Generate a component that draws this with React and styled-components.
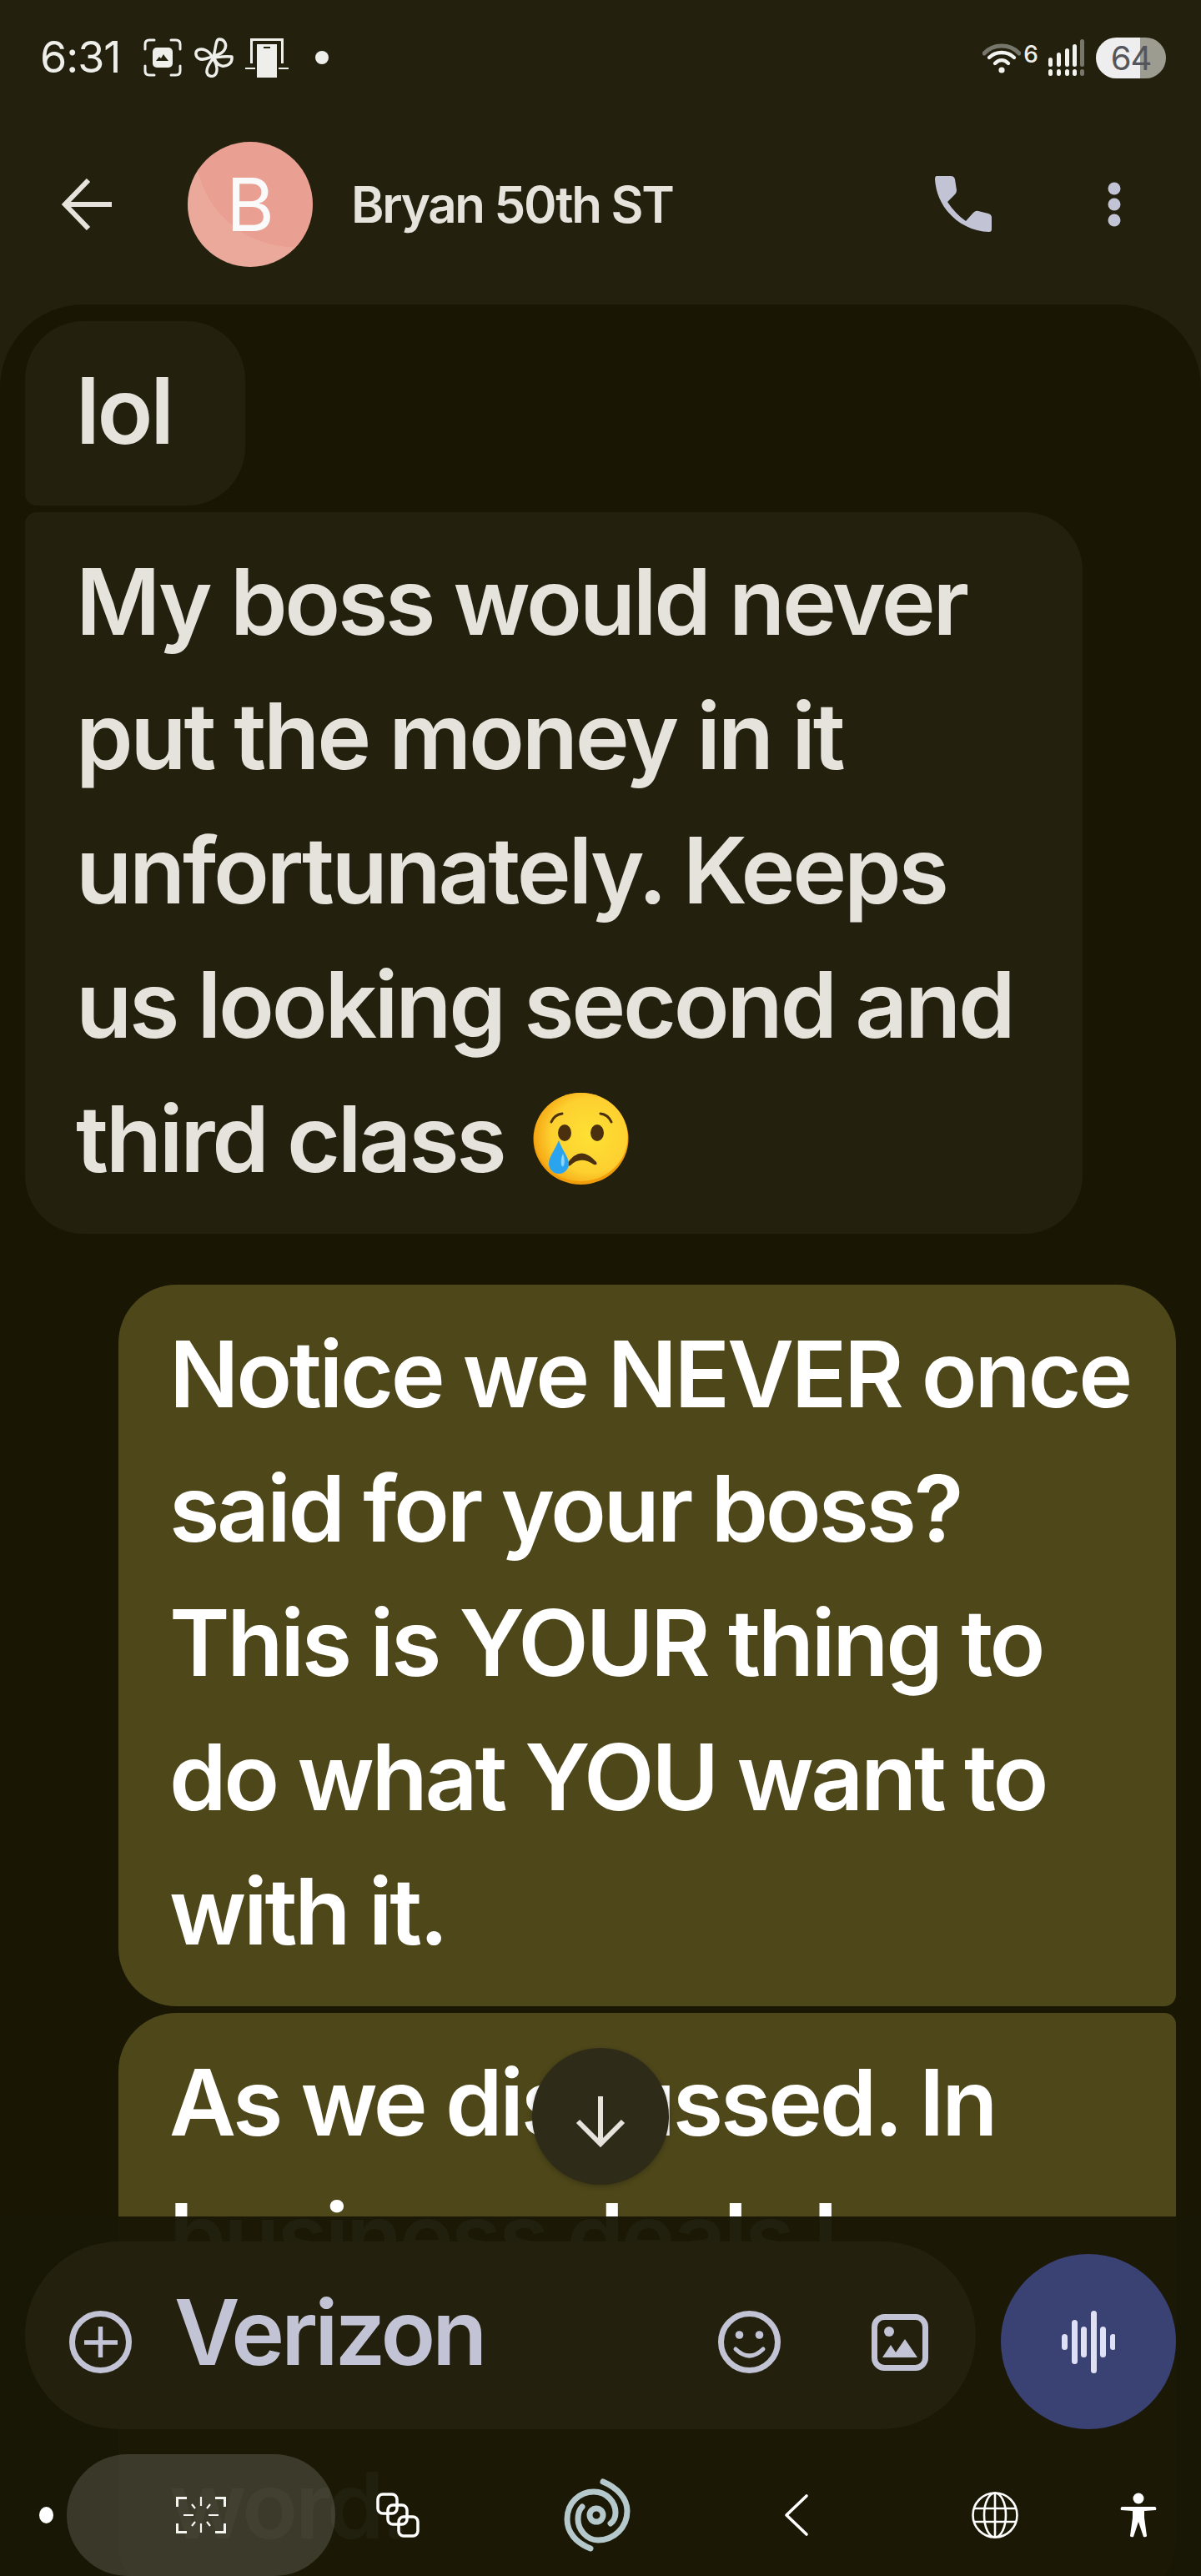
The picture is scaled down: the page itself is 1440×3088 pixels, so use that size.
import React from "react";
import styled, { createGlobalStyle } from "styled-components";

const FONT = `Inter, "Noto Sans", "Liberation Sans", sans-serif`;

const Global = createGlobalStyle`
  html, body { margin: 0; padding: 0; background: #191704; }
  * { box-sizing: border-box; }
  svg { flex-shrink: 0; }
`;

// [Icons]--------------------------------------------------------------------------------------------
const ScreenshotIcon = () => (
  <svg width="46" height="46" viewBox="0 0 46 46" fill="none" stroke="#eeeeea" strokeWidth="3" strokeLinecap="round">
    <path d="M2 13V7Q2 2 7 2h6M33 2h6q5 0 5 5v6M44 33v6q0 5-5 5h-6M13 44H7q-5 0-5-5v-6" />
    <rect x="11" y="11" width="24" height="24" rx="5" fill="#eeeeea" stroke="none" />
    <path d="M15 27l4-5 2 2 3-5 2 3 4 5z" fill="#23200e" stroke="none" />
  </svg>
);

const FanIcon = () => (
  <svg width="48" height="48" viewBox="0 0 48 48" fill="none" stroke="#eeeeea" strokeWidth="3.4" strokeLinejoin="round">
    <path d="M24 22C27 14 26 2 31 2c6 0 9 6 7 11-2 5-8 8-14 9z" />
    <path d="M25 24c8-1 13-2 21-1 1 8-6 12-12 11-5-1-8-6-9-10z" />
    <path d="M23 25c-3 6-8 10-7 17 1 4 5 5 8 4 6-3 5-14-1-21z" />
    <path d="M22 23c-6 2-11 5-16 2-4-3-4-8-1-10 6-3 14 1 17 8z" />
  </svg>
);

const DevicesIcon = () => (
  <svg width="52" height="48" viewBox="0 0 52 48" fill="#eeeeea">
    <path d="M6 1h40v30h-3V5q0-1-1-1H10q-1 0-1 1v26H6z" />
    <path d="M0 36h12v2H0zM40 36h12v2H40z" />
    <path d="M14 8h24v40H14z" />
    <rect x="22" y="11" width="8" height="2" fill="#23200e" />
  </svg>
);

const WifiIcon = () => (
  <svg width="46" height="40" viewBox="0 0 46 40" fill="none" strokeLinecap="round" strokeWidth="4.4">
    <path d="M2 15C13 3 33 3 44 15" stroke="#77766a" strokeWidth="5" />
    <path d="M8 20C16 12 30 12 38 20" stroke="#f2f2ee" />
    <path d="M15 27C20 22 26 22 31 27" stroke="#f2f2ee" />
    <circle cx="23" cy="35" r="3.6" fill="#f2f2ee" />
  </svg>
);

const SignalIcon = () => {
  const bars = [
    [0, 22, 11, "#f2f2ee"],
    [10, 16, 17, "#f2f2ee"],
    [20, 11, 22, "#f2f2ee"],
    [29, 6, 27, "#f2f2ee"],
    [38, 0, 33, "#77766a"],
  ];
  return (
    <svg width="43" height="44" viewBox="0 0 43 44">
      {bars.map(([x, y, h, c]) => (
        <g key={x} fill={c}>
          <rect x={x} y={y} width="5" height={h} rx="2.5" />
          <rect x={x} y="36" width="5" height="8" rx="2.5" />
        </g>
      ))}
    </svg>
  );
};

const ArrowLeftIcon = () => (
  <svg width="62" height="62" viewBox="0 0 62 62" fill="none" stroke="#e5e3dc" strokeWidth="6">
    <path d="M60 31H4M32 2L4 31l28 29" />
  </svg>
);

const PhoneIcon = () => (
  <svg width="68" height="68" viewBox="0 0 68 68" fill="#c2c3d5">
    <path d="M2 0H19Q23 0 24 4L26 17Q26 20 24 22L15 31Q24 45 37 54L46 44Q49 41 52 42L64 45Q68 46 68 50V64Q68 67 65 67C30 66 2 38 0 4Q0 0 2 0Z" />
  </svg>
);

const DotsIcon = () => (
  <svg width="16" height="54" viewBox="0 0 16 54" fill="#c2c3d5">
    <ellipse cx="8" cy="8" rx="7.5" ry="7.5" />
    <ellipse cx="8" cy="27" rx="7.5" ry="7.5" />
    <ellipse cx="8" cy="46" rx="7.5" ry="7.5" />
  </svg>
);

const CryingEmoji = () => (
  <EmojiSvg width="115" height="112" viewBox="0 0 115 112">
    <defs>
      <radialGradient id="face" cx="60%" cy="48%" r="60%">
        <stop offset="0%" stopColor="#fee133" />
        <stop offset="70%" stopColor="#fdd030" />
        <stop offset="100%" stopColor="#f5a815" />
      </radialGradient>
    </defs>
    <ellipse cx="57.5" cy="56" rx="57" ry="55" fill="#f19e0c" />
    <ellipse cx="57.5" cy="54" rx="56" ry="53" fill="url(#face)" />
    <path d="M22 36Q26 27 35 26M94 36Q90 27 81 26" fill="none" stroke="#4b300f" strokeWidth="3" strokeLinecap="round" />
    <ellipse cx="38" cy="49" rx="8" ry="10" fill="#4b300f" />
    <ellipse cx="77" cy="49" rx="8" ry="10" fill="#4b300f" />
    <path d="M41 86Q57 62 76 84Q78 88 73 87Q57 76 45 88Q41 90 41 86Z" fill="#4b300f" />
    <path d="M31 58C26 70 19 78 19 86a12 12 0 0 0 24 0C43 78 35 70 31 58Z" fill="#2aa4ee" />
    <path d="M36 74q3 8 1 14-2 3-3-1-1-7 2-13z" fill="#8fd4f6" />
  </EmojiSvg>
);

const PlusIcon = () => (
  <svg width="75" height="75" viewBox="0 0 75 75" fill="none" stroke="#c2c3d5" strokeWidth="7">
    <circle cx="37.5" cy="37.5" r="34" />
    <path d="M18 38H58M37.5 19V56" strokeWidth="5.5" />
  </svg>
);

const SmileIcon = () => (
  <svg width="75" height="75" viewBox="0 0 75 75" fill="none" stroke="#c2c3d5" strokeWidth="7">
    <circle cx="37.5" cy="37.5" r="34" />
    <circle cx="25.5" cy="29" r="4.8" fill="#c2c3d5" stroke="none" />
    <circle cx="49.5" cy="29" r="4.8" fill="#c2c3d5" stroke="none" />
    <path d="M21 46Q37.5 62 54 46" strokeWidth="5" strokeLinecap="round" />
  </svg>
);

const GalleryIcon = () => (
  <svg width="68" height="68" viewBox="0 0 68 68" fill="none">
    <rect x="3.5" y="3.5" width="61" height="61" rx="12" stroke="#c2c3d5" strokeWidth="7" />
    <ellipse cx="21" cy="21" rx="6" ry="6" fill="#c2c3d5" />
    <path d="M13 52l10-15 6 9 11-16 15 22z" fill="#c2c3d5" />
  </svg>
);

const WaveIcon = () => {
  const bars = [[0, 28, 19], [12, 11, 53], [23, 19, 37], [35, 0, 75], [46, 19, 37], [58, 28, 19]];
  return (
    <svg width="64" height="75" viewBox="0 0 64 75" fill="#dfe0f3">
      {bars.map(([x, y, h]) => (
        <rect key={x} x={x} y={y} width="7" height={h} rx="3.5" />
      ))}
    </svg>
  );
};

const ArrowDownIcon = () => (
  <svg width="60" height="62" viewBox="0 0 60 62" fill="none" stroke="#e5e3dc" strokeWidth="6">
    <path d="M30 0V58M3 30l27 27 27-27" />
  </svg>
);

const ScanIcon = () => (
  <svg width="60" height="44" viewBox="0 0 60 44" fill="none" stroke="#f5f5f0" strokeWidth="3">
    <path d="M13 1.5H1.5V12M47 1.5H58.5V12M13 42.500H1.500V32M47 42.500H58.500V32" />
    <path d="M30 0V11M30 32V43M9 22H21M39 22H51M19 9l4 5M41 9l-4 5M19 35l4-5M41 35l-4-5" strokeWidth="2.200" />
  </svg>
);

const ChainIcon = () => (
  <svg width="52" height="54" viewBox="0 0 52 54" fill="none" stroke="#fff" strokeWidth="3.500">
    <rect x="2" y="2" width="23" height="23" rx="6" />
    <rect x="14" y="15" width="23" height="23" rx="6" />
    <rect x="27" y="29" width="23" height="23" rx="6" />
  </svg>
);

const SpiralIcon = () => (
  <svg width="120" height="100" viewBox="-5 -5 120 100" fill="none" stroke="#b5c8cc" strokeWidth="7" strokeLinecap="round">
    <path d="M48 85C30 78 20 65 20 50C20 30 35 17 52 17C68 17 78 30 78 42C78 47 76 52 72 55" />
    <path d="M63 5C80 12 92 25 92 40C92 60 76 75 57 75C43 75 33 62 33 50C33 43 35 38 38 35" />
    <circle cx="55" cy="45" r="8" />
  </svg>
);

const ChevronIcon = () => (
  <svg width="30" height="52" viewBox="0 0 30 52" fill="none" stroke="#fff" strokeWidth="3.600" strokeLinecap="round" strokeLinejoin="round">
    <path d="M27 3L3 26l24 23" />
  </svg>
);

const GlobeIcon = () => (
  <svg width="56" height="56" viewBox="0 0 56 56" fill="none" stroke="#fff" strokeWidth="2.600">
    <circle cx="28" cy="28" r="26.500" />
    <ellipse cx="28" cy="28" rx="13" ry="26.500" />
    <path d="M28 1.500V54.500M2 20H54M2 36H54" />
  </svg>
);

const PersonIcon = () => (
  <svg width="44" height="54" viewBox="0 0 44 54" fill="#fff">
    <circle cx="22" cy="7" r="6.500" />
    <path d="M2 17H42Q44 18 43 21L29 22V30L32 52Q31 54 28 53L22 35L16 53Q13 54 12 52L15 30V22L1 21Q0 18 2 17Z" />
  </svg>
);

// [Status bar]--------------------------------------------------------------------------------------------
const StatusBar = () => (
  <StatusRow>
    <StatusLeft>
      <Clock>6:31</Clock>
      <ScreenshotIcon />
      <FanIcon />
      <DevicesIcon />
      <StatusDot />
    </StatusLeft>
    <StatusRight>
      <WifiIcon />
      <WifiSix>6</WifiSix>
      <SignalIcon />
      <Battery>64</Battery>
    </StatusRight>
  </StatusRow>
);

const StatusRow = styled.div`
  display: flex;
  justify-content: space-between;
  align-items: center;
  height: 62px;
  margin-top: 38px;
  padding: 0 42px 0 48px;
  color: #eeeeea;
  font-family: ${FONT};
`;

const StatusLeft = styled.div`
  display: flex;
  align-items: center;
  gap: 14px;
`;

const Clock = styled.span`
  font-size: 52px;
  font-weight: 400;
  line-height: 1;
  letter-spacing: -1px;
  width: 110px;
`;

const StatusDot = styled.span`
  width: 16px;
  height: 16px;
  border-radius: 50%;
  background: #eeeeea;
  margin-left: 18px;
`;

const StatusRight = styled.div`
  display: flex;
  align-items: center;
`;

const WifiSix = styled.span`
  font-size: 28px;
  font-weight: 500;
  align-self: flex-start;
  margin: 0 12px 0 3px;
  line-height: 1;
  padding-top: 6px;
`;

const Battery = styled.div`
  width: 84px;
  height: 49px;
  margin-left: 14px;
  border-radius: 25px;
  display: flex;
  align-items: center;
  justify-content: center;
  background: linear-gradient(90deg, #eeeeee 63%, #9c9c90 63%);
  color: #55565c;
  font-size: 40px;
  font-weight: 400;
  letter-spacing: -1px;
`;

// [Header]--------------------------------------------------------------------------------------------
const Header = () => (
  <HeaderRow>
    <BackSlot>
      <ArrowLeftIcon />
    </BackSlot>
    <Avatar>B</Avatar>
    <ContactName>Bryan 50th ST</ContactName>
    <HeaderActions>
      <PhoneIcon />
      <DotsIcon />
    </HeaderActions>
  </HeaderRow>
);

const HeaderRow = styled.header`
  display: flex;
  align-items: center;
  height: 150px;
  margin-top: 70px;
  padding-left: 74px;
  font-family: ${FONT};
`;

const BackSlot = styled.div`
  display: flex;
  width: 151px;
`;

const Avatar = styled.div`
  width: 150px;
  height: 150px;
  border-radius: 50%;
  display: flex;
  align-items: center;
  justify-content: center;
  background:
    radial-gradient(circle at 85% 5%, transparent 62%, #eba99c 62%, #eba99c 100%),
    #e9a092;
  background-color: #e9a092;
  color: #fafafa;
  font-size: 88px;
  font-weight: 400;
`;

const ContactName = styled.div`
  margin-left: 46px;
  flex: 1;
  color: #e5e3dc;
  font-size: 60px;
  font-weight: 600;
  letter-spacing: -2.3px;
`;

const HeaderActions = styled.div`
  display: flex;
  align-items: center;
  gap: 139px;
  padding-right: 96px;
`;

// [Conversation]--------------------------------------------------------------------------------------------
const Conversation = styled.main`
  flex: 1;
  margin-top: 45px;
  padding: 20px 30px 0;
  background: #191704;
  border-radius: 100px 100px 0 0;
  display: flex;
  flex-direction: column;
  gap: 8px;
  overflow: hidden;
`;

const Bubble = styled.div`
  flex-shrink: 0;
  align-self: ${({ $sent }) => ($sent ? "flex-end" : "flex-start")};
  width: ${({ $wide }) => ($wide ? "1268px" : "auto")};
  margin-top: ${({ $first }) => ($first ? "53px" : "0")};
  padding: 27px 0 33px 61px;
  padding-right: ${({ $wide }) => ($wide ? "0" : "88px")};
  border-radius: ${({ $radius }) => $radius};
  background: ${({ $sent }) => ($sent ? "#4e471a" : "#23200e")};
  color: ${({ $sent }) => ($sent ? "#ffffff" : "#e5e3dc")};
  font-family: ${FONT};
  font-size: 110px;
  font-weight: 600;
  line-height: 161px;
  letter-spacing: -3.3px;
  white-space: pre;
`;

const EmojiSvg = styled.svg`
  vertical-align: -16px;
  margin-left: 10px;
`;

// [Bottom dock]--------------------------------------------------------------------------------------------
const Dock = styled.div`
  position: absolute;
  left: 0;
  right: 0;
  top: 2657px;
  bottom: 0;
  background: rgba(25, 23, 4, 0.965);
  padding-top: 30px;
  font-family: ${FONT};
`;

const ComposeRow = styled.div`
  display: flex;
  align-items: flex-end;
  gap: 30px;
  padding: 0 30px;
`;

const ComposeField = styled.div`
  flex: 1;
  height: 225px;
  border-radius: 112px;
  background: #23200e;
  display: flex;
  align-items: center;
  padding: 16px 57px 0 53px;
`;

const ComposeHint = styled.div`
  margin-left: 51px;
  flex: 1;
  color: #c2c3d5;
  font-size: 108px;
  font-weight: 600;
  letter-spacing: -4px;
  line-height: 1;
  margin-top: -24px;
`;

const ComposeIcons = styled.div`
  display: flex;
  align-items: center;
  gap: 109px;
`;

const SendButton = styled.div`
  width: 210px;
  height: 210px;
  border-radius: 50%;
  background: #3a4173;
  display: flex;
  align-items: center;
  justify-content: center;
`;

const NavRow = styled.nav`
  display: grid;
  grid-template-columns: 50px 322px 150px 326px 154px 322px 22px;
  padding-left: 30px;
  margin-top: 30px;
  height: 146px;
`;

const NavSlot = styled.div`
  display: flex;
  align-items: center;
  justify-content: center;
  border-radius: 73px;
  background: ${({ $active }) => ($active ? "rgba(255, 255, 255, 0.15)" : "transparent")};
`;

const NavDot = styled.span`
  width: 17px;
  height: 20px;
  border-radius: 50%;
  background: #ffffff;
`;

const ScrollDown = styled.div`
  position: absolute;
  left: 638px;
  top: 2455px;
  width: 164px;
  height: 164px;
  border-radius: 50%;
  background: #2e2b18;
  box-shadow: 0 2px 6px rgba(0, 0, 0, 0.25);
  display: flex;
  align-items: center;
  justify-content: center;
  padding-top: 14px;
`;

// [App]--------------------------------------------------------------------------------------------
const Screen = styled.div`
  position: relative;
  width: 1440px;
  height: 3088px;
  overflow: hidden;
  display: flex;
  flex-direction: column;
  background: #23200e;
`;

const App = () => {
  return (
    <Screen>
      <Global />
      <StatusBar />
      <Header />
      <Conversation>
        <Bubble $radius="70px 70px 70px 14px">lol</Bubble>
        <Bubble $wide $radius="14px 70px 70px 70px">
          {"My boss would never\nput the money in it\nunfortunately. Keeps\nus looking second and\nthird class "}
          <CryingEmoji />
        </Bubble>
        <Bubble $sent $wide $first $radius="70px 70px 14px 70px">
          {"Notice we NEVER once\nsaid for your boss?\nThis is YOUR thing to\ndo what YOU want to\nwith it."}
        </Bubble>
        <Bubble $sent $wide $radius="70px 14px 70px 70px">
          {"As we discussed. In\nbusiness deals I\n \nword."}
        </Bubble>
      </Conversation>
      <ScrollDown>
        <ArrowDownIcon />
      </ScrollDown>
      <Dock>
        <ComposeRow>
          <ComposeField>
            <PlusIcon />
            <ComposeHint>Verizon</ComposeHint>
            <ComposeIcons>
              <SmileIcon />
              <GalleryIcon />
            </ComposeIcons>
          </ComposeField>
          <SendButton>
            <WaveIcon />
          </SendButton>
        </ComposeRow>
        <NavRow>
          <NavSlot><NavDot /></NavSlot>
          <NavSlot $active><ScanIcon /></NavSlot>
          <NavSlot><ChainIcon /></NavSlot>
          <NavSlot><SpiralIcon /></NavSlot>
          <NavSlot><ChevronIcon /></NavSlot>
          <NavSlot><GlobeIcon /></NavSlot>
          <NavSlot><PersonIcon /></NavSlot>
        </NavRow>
      </Dock>
    </Screen>
  );
};

export default App;
